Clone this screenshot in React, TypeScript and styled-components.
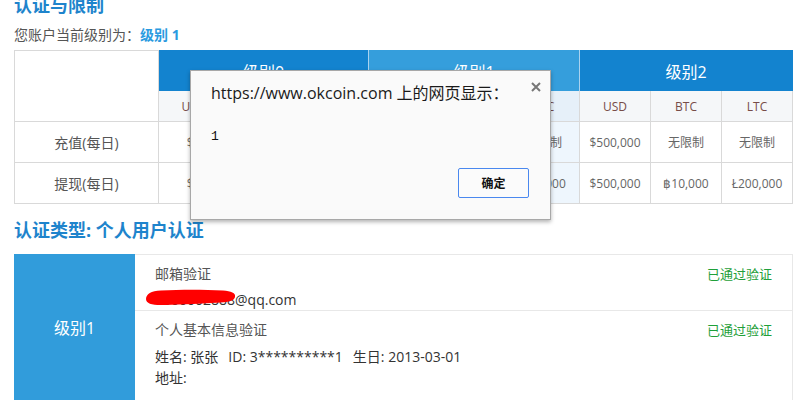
import React from "react";
import styled, { createGlobalStyle } from "styled-components";

const Global = createGlobalStyle`
  html, body { margin: 0; padding: 0; background: #fff; }
  body { font-family: "Open Sans", "Noto Sans CJK SC", sans-serif; }
  * { box-sizing: border-box; }
`;

const Page = styled.div`
  position: relative;
  width: 796px;
  height: 406px;
  overflow: hidden;
  padding: 0 3px 0 14px;
`;

const Title = styled.h2<{ $top: number; $bottom: number }>`
  margin: ${(p) => p.$top}px 0 ${(p) => p.$bottom}px;
  font-size: 18px;
  line-height: 24px;
  font-weight: 700;
  color: #1e84cc;
`;

const LevelLine = styled.div`
  font-size: 14px;
  line-height: 20px;
  color: #555;
  margin-bottom: 5px;
`;

const LevelValue = styled.span`
  color: #2a9ae0;
  font-weight: 700;
`;

const Grid = styled.div`
  display: grid;
  width: 779px;
  grid-template-columns: 145px 70px 70px 70px 70px 70px 71px 71px 71px 71px;
  grid-template-rows: 41px 31px 41px 41px;
`;

const Cell = styled.div`
  display: flex;
  align-items: center;
  justify-content: center;
  border-right: 1px solid #d9d9d9;
  border-bottom: 1px solid #d9d9d9;
`;

const CornerCell = styled(Cell)`
  grid-row: span 2;
  border-left: 1px solid #d9d9d9;
  border-top: 1px solid #d9d9d9;
  background: #fff;
`;

const GroupHead = styled(Cell)<{ $active: boolean; $last: boolean }>`
  grid-column: span 3;
  background: ${(p) => (p.$active ? "#359edc" : "#1383cf")};
  border-right: 1px solid ${(p) => (p.$last ? "#1383cf" : "#a9d2ef")};
  border-bottom: none;
  color: #fff;
  font-size: 16px;
`;

const SubHead = styled(Cell)<{ $active: boolean }>`
  background: ${(p) => (p.$active ? "#e6f0f9" : "#f5f7f9")};
  color: #774c48;
  font-size: 12px;
`;

const RowLabel = styled(Cell)`
  border-left: 1px solid #d9d9d9;
  color: #555;
  font-size: 14px;
`;

const ValueCell = styled(Cell)<{ $active: boolean }>`
  background: ${(p) => (p.$active ? "#eef6fd" : "#fff")};
  color: #666;
  font-size: 12px;
`;

const Card = styled.div`
  display: flex;
  height: 146px;
`;

const LevelBlock = styled.div`
  width: 121px;
  flex: none;
  background: #319cdb;
  color: #fff;
  font-size: 16px;
  display: flex;
  align-items: center;
  justify-content: center;
`;

const Details = styled.div`
  flex: 1;
  border-top: 1px solid #e8e8e8;
  border-right: 1px solid #e8e8e8;
`;

const VerifyRow = styled.div<{ $divider: boolean }>`
  display: flex;
  justify-content: space-between;
  align-items: flex-start;
  padding: 9px 20px 0 20px;
  height: ${(p) => (p.$divider ? "56px" : "auto")};
  border-bottom: ${(p) => (p.$divider ? "1px solid #e8e8e8" : "none")};
`;

const VerifyBody = styled.div`
  display: flex;
  flex-direction: column;
`;

const VerifyName = styled.div`
  font-size: 14px;
  line-height: 20px;
  color: #555;
`;

const InfoLine = styled.div<{ $gap: number }>`
  position: relative;
  margin-top: ${(p) => p.$gap}px;
  font-size: 14px;
  line-height: 21px;
  color: #333;
`;

const InfoItem = styled.span`
  margin-right: 10px;
`;

const Passed = styled.div`
  font-size: 13px;
  line-height: 20px;
  color: #1fa03a;
`;

const Scribble = styled.svg`
  position: absolute;
  left: -10px;
  top: 0px;
`;

const Dialog = styled.div`
  position: absolute;
  left: 190px;
  top: 70px;
  width: 361px;
  height: 150px;
  background: #fafafa;
  border: 1px solid #a8a8a8;
  box-shadow: 0 2px 4px rgba(0, 0, 0, 0.3);
  display: flex;
  flex-direction: column;
  padding: 12px 21px 21px 20px;
`;

const DialogMessage = styled.div`
  font-size: 16px;
  line-height: 20px;
  color: #1a1a1a;
`;

const DialogText = styled.div`
  margin-top: 26px;
  font-family: "Liberation Mono", monospace;
  font-size: 13px;
  line-height: 16px;
  color: #111;
`;

const CloseIcon = styled.svg`
  position: absolute;
  top: 11px;
  right: 9px;
`;

const ButtonRow = styled.div`
  margin-top: auto;
  display: flex;
  justify-content: flex-end;
`;

const OkButton = styled.button`
  width: 71px;
  height: 30px;
  border: 1px solid #4a88ef;
  border-radius: 2px;
  background: #fbfbfb;
  font-family: "Open Sans", "Noto Sans CJK SC", sans-serif;
  font-size: 12px;
  font-weight: 700;
  color: #111;
  padding: 0;
`;

type Level = { name: string; active: boolean; deposit: string[]; withdraw: string[] };

const levels: Level[] = [
  { name: "级别0", active: false, deposit: ["$0", "无限制", "无限制"], withdraw: ["$0", "฿0", "Ł0"] },
  { name: "级别1", active: true, deposit: ["$50,000", "无限制", "无限制"], withdraw: ["$50,000", "฿1,000", "Ł20,000"] },
  { name: "级别2", active: false, deposit: ["$500,000", "无限制", "无限制"], withdraw: ["$500,000", "฿10,000", "Ł200,000"] },
];

const currencies = ["USD", "BTC", "LTC"];

export default function App() {
  return (
    <>
      <Global />
      <Page>
        <Title $top={-7} $bottom={8}>认证与限制</Title>
        <LevelLine>
          您账户当前级别为：<LevelValue>级别 1</LevelValue>
        </LevelLine>
        <Grid>
          <CornerCell />
          {levels.map((l, i) => (
            <GroupHead key={l.name} $active={l.active} $last={i === levels.length - 1}>
              {l.name}
            </GroupHead>
          ))}
          {levels.map((l) =>
            currencies.map((c) => (
              <SubHead key={l.name + c} $active={l.active}>
                {c}
              </SubHead>
            ))
          )}
          <RowLabel>充值(每日)</RowLabel>
          {levels.map((l) =>
            l.deposit.map((v, j) => (
              <ValueCell key={l.name + "d" + j} $active={l.active}>
                {v}
              </ValueCell>
            ))
          )}
          <RowLabel>提现(每日)</RowLabel>
          {levels.map((l) =>
            l.withdraw.map((v, j) => (
              <ValueCell key={l.name + "w" + j} $active={l.active}>
                {v}
              </ValueCell>
            ))
          )}
        </Grid>
        <Title $top={14} $bottom={12}>认证类型: 个人用户认证</Title>
        <Card>
          <LevelBlock>级别1</LevelBlock>
          <Details>
            <VerifyRow $divider>
              <VerifyBody>
                <VerifyName>邮箱验证</VerifyName>
                <InfoLine $gap={5}>
                  0000002888@qq.com
                  <Scribble width="92" height="20" viewBox="0 0 92 20">
                    <path
                      d="M1 10 C1 5 6 2 16 1.5 C36 0.5 58 0.5 78 1.5 C86 2 91 4 90 8 C89 12 84 13 76 13.5 C58 14.5 38 15.5 20 16 C8 16.5 1 15 1 10 Z"
                      fill="#ff0000"
                    />
                  </Scribble>
                </InfoLine>
              </VerifyBody>
              <Passed>已通过验证</Passed>
            </VerifyRow>
            <VerifyRow $divider={false}>
              <VerifyBody>
                <VerifyName>个人基本信息验证</VerifyName>
                <InfoLine $gap={6}>
                  <InfoItem>姓名: 张张</InfoItem>
                  <InfoItem>ID: 3**********1</InfoItem>
                  <span>生日: 2013-03-01</span>
                </InfoLine>
                <InfoLine $gap={0}>地址:</InfoLine>
              </VerifyBody>
              <Passed>已通过验证</Passed>
            </VerifyRow>
          </Details>
        </Card>
        <Dialog>
          <DialogMessage>https://www.okcoin.com 上的网页显示：</DialogMessage>
          <CloseIcon width="10" height="10" viewBox="0 0 10 10">
            <path d="M1 1 L9 9 M9 1 L1 9" stroke="#777" strokeWidth="2" />
          </CloseIcon>
          <DialogText>1</DialogText>
          <ButtonRow>
            <OkButton>确定</OkButton>
          </ButtonRow>
        </Dialog>
      </Page>
    </>
  );
}
